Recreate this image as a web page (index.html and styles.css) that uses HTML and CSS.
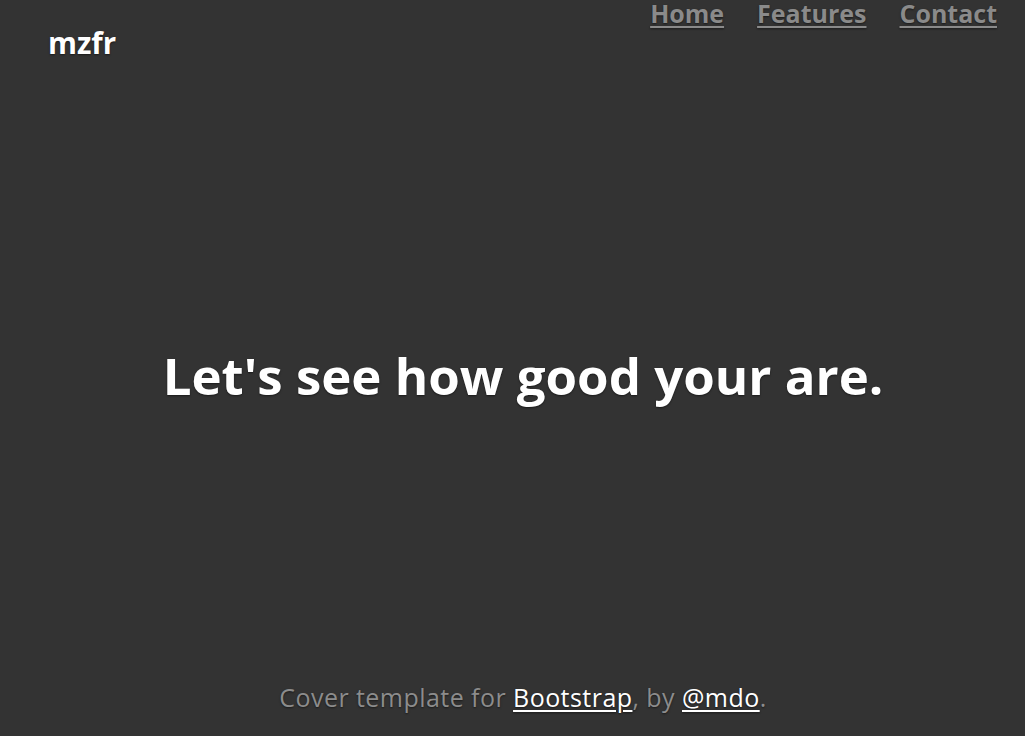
FILE: index.html
```html
<!DOCTYPE html>
<html lang="en">
<head>
<meta charset="utf-8">
<title>mzfr</title>
<link rel="stylesheet" href="styles.css">
</head>
<body>
<div class="cover">
  <header class="masthead">
    <h3 class="brand">mzfr</h3>
    <nav class="nav">
      <a class="nav-link" href="#">Home</a>
      <a class="nav-link" href="#">Features</a>
      <a class="nav-link" href="#">Contact</a>
    </nav>
  </header>
  <main class="inner">
    <h1 class="heading">Let's see how good your are.</h1>
  </main>
  <footer class="mastfoot">
    <p>Cover template for <a href="#">Bootstrap</a>, by <a href="#">@mdo</a>.</p>
  </footer>
</div>
</body>
</html>
```

FILE: styles.css
```css
html, body {
  margin: 0;
  padding: 0;
  height: 100%;
}
body {
  background: #333333;
  color: #ffffff;
  font-family: "Open Sans", "Noto Sans", sans-serif;
  text-shadow: 0 1px 2px rgba(0, 0, 0, 0.5);
  overflow: hidden;
}
.cover {
  display: flex;
  flex-direction: column;
  height: 736px;
  box-sizing: border-box;
}
.masthead {
  display: flex;
  justify-content: space-between;
  align-items: flex-start;
  padding: 0 28px 0 48px;
}
.brand {
  margin: 25px 0 0 0;
  font-size: 29.5px;
  font-weight: 700;
  line-height: 1.2;
}
.nav {
  display: flex;
  gap: 33px;
  padding-top: 1px;
}
.nav-link {
  color: #8a8a8a;
  font-size: 25px;
  font-weight: 700;
  line-height: 1;
  text-decoration: underline;
  text-decoration-thickness: 2px;
  text-underline-offset: 3px;
}
.inner {
  flex: 1;
  display: flex;
  align-items: center;
  justify-content: center;
  padding-left: 21px;
}
.heading {
  margin: 0;
  font-size: 51px;
  font-weight: 700;
  line-height: 1.2;
  padding-top: 8px;
}
.mastfoot {
  text-align: center;
  padding-left: 21px;
  color: #8c8c8c;
  font-size: 25px;
  letter-spacing: 0.45px;
}
.mastfoot p {
  margin: 0 0 24px 0;
  line-height: 1.2;
}
.mastfoot a {
  color: #ffffff;
  text-decoration: underline;
  text-underline-offset: 3px;
}
```
